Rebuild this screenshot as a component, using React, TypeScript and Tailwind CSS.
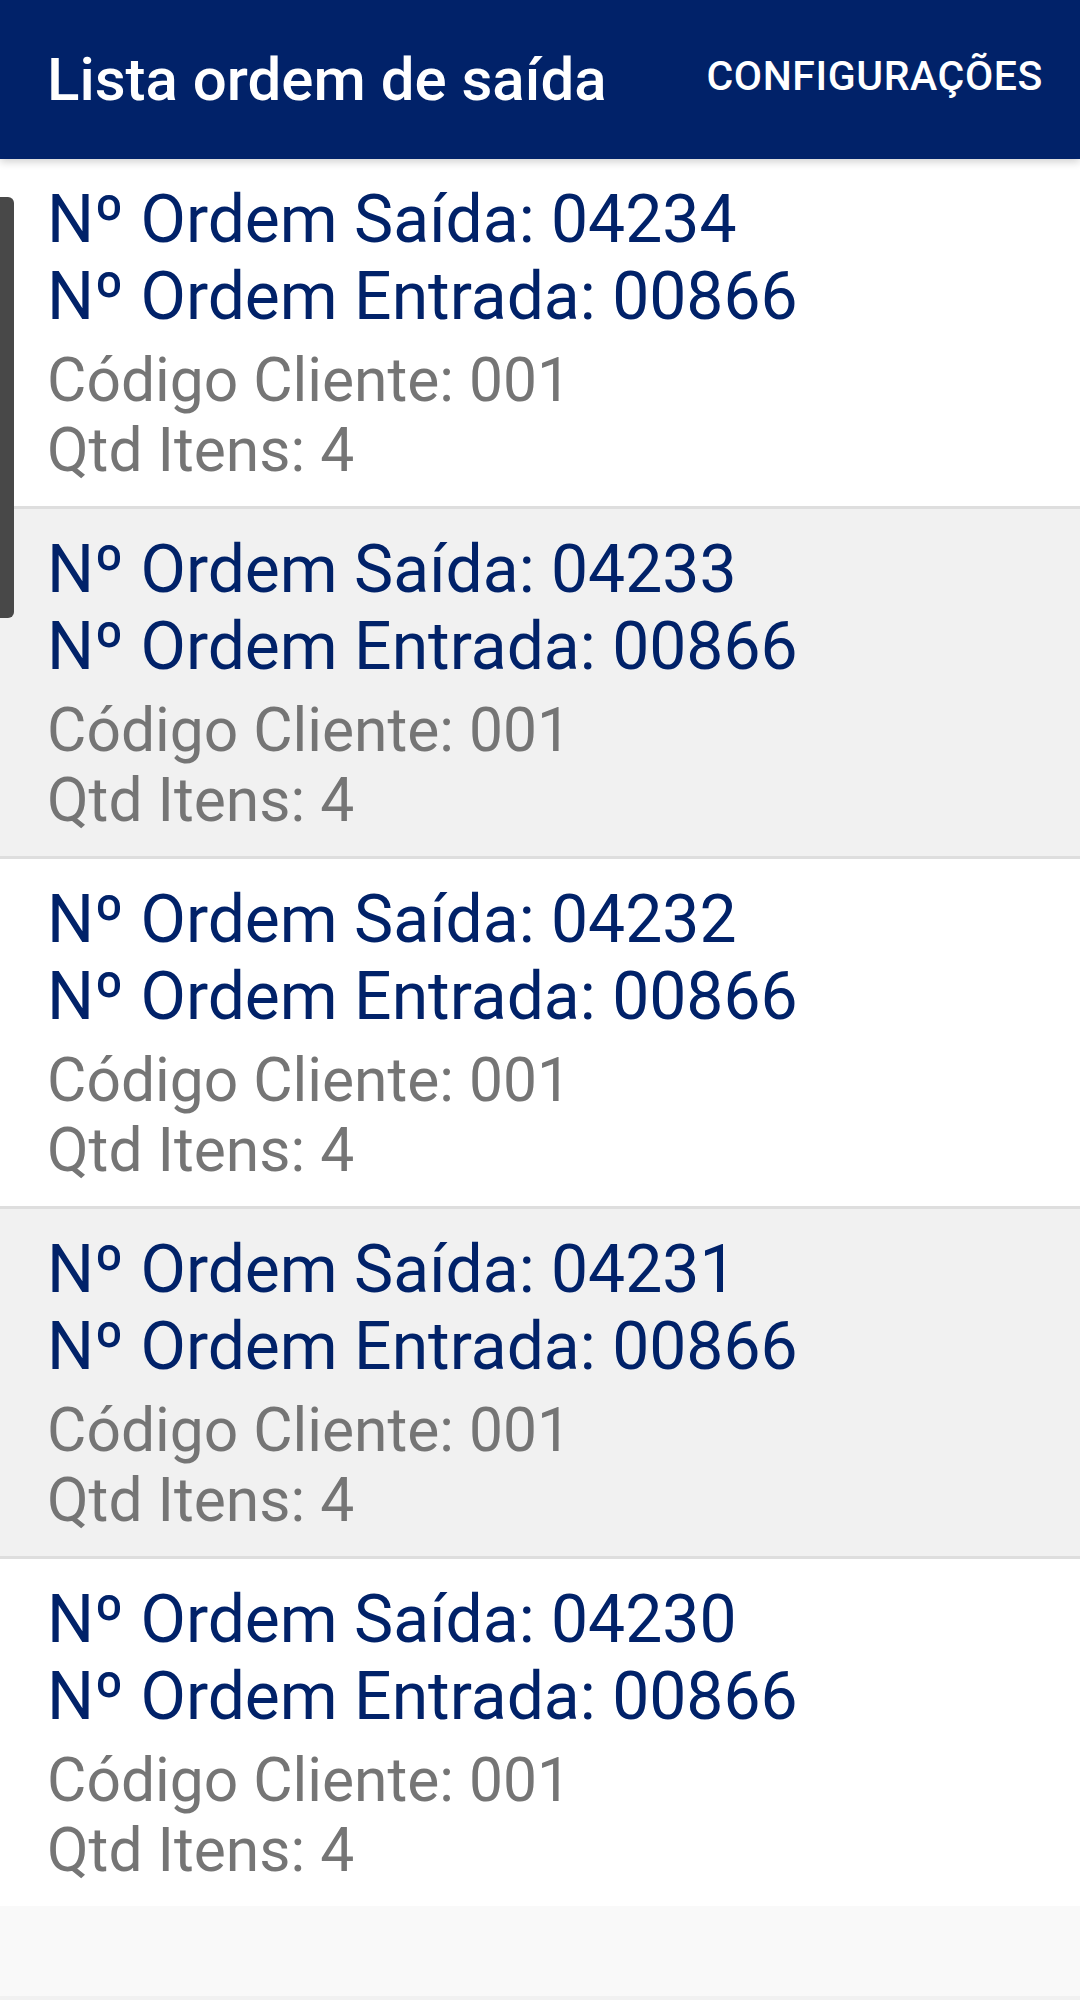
const ordens = [
  { saida: '04234', entrada: '00866', cliente: '001', itens: 4 },
  { saida: '04233', entrada: '00866', cliente: '001', itens: 4 },
  { saida: '04232', entrada: '00866', cliente: '001', itens: 4 },
  { saida: '04231', entrada: '00866', cliente: '001', itens: 4 },
  { saida: '04230', entrada: '00866', cliente: '001', itens: 4 },
];

const App = () => {
  return (
    <div className="relative w-[1080px] h-[2000px] bg-[#f9f9f9] font-['Roboto',sans-serif] overflow-hidden flex flex-col">
      {/* toolbar */}
      <header className="relative z-10 h-[159px] bg-[#012269] flex items-center justify-between pl-[47px] pr-[37px] shadow-[0_3px_8px_rgba(0,0,0,0.18)]">
        <h1 className="text-white text-[60px] font-medium leading-none">Lista ordem de saída</h1>
        <span className="text-white text-[41px] font-medium leading-none tracking-[0.6px] -mt-[6px]">CONFIGURAÇÕES</span>
      </header>

      {/* list */}
      <div className="flex flex-col">
        {ordens.map((o, i) => (
          <div
            key={o.saida}
            className={
              (i % 2 === 0 ? 'bg-white' : 'bg-[#f1f1f1]') +
              (i < ordens.length - 1 ? ' border-b-[3px] border-[#dedede]' : '') +
              ' pl-[47px] pt-[22px] pb-[20px]'
            }
          >
            <p className="text-[#012269] text-[66px] leading-[77px]">Nº Ordem Saída: {o.saida}</p>
            <p className="text-[#012269] text-[66px] leading-[77px]">Nº Ordem Entrada: {o.entrada}</p>
            <p className="text-[#757575] text-[60.5px] leading-[70px] mt-[11px]">Código Cliente: {o.cliente}</p>
            <p className="text-[#757575] text-[60.5px] leading-[70px]">Qtd Itens: {o.itens}</p>
          </div>
        ))}
      </div>

      <div className="flex-1" />
      <div className="h-[4px] bg-[#f1f1f1]" />

      {/* scroll indicator */}
      <div className="absolute left-0 top-[197px] w-[14px] h-[421px] bg-[#484848] rounded-r-[6px]" />
    </div>
  );
};

export default App;
